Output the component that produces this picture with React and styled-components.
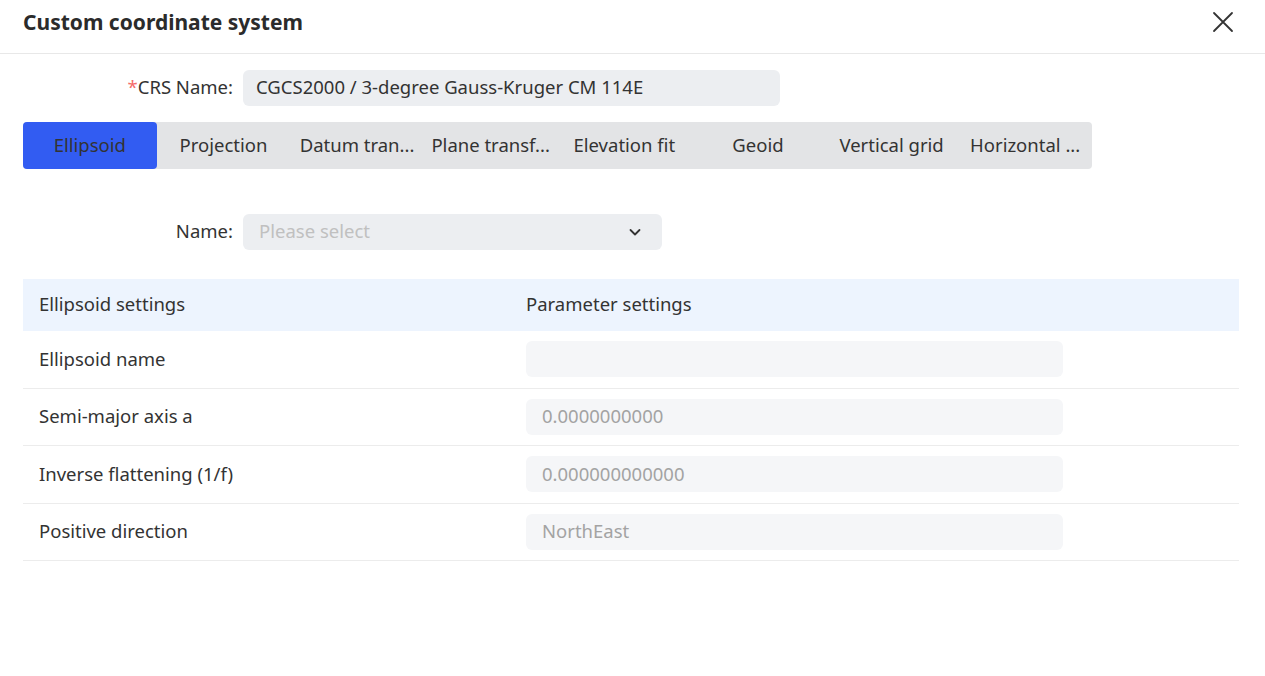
import React from "react";
import styled, { createGlobalStyle } from "styled-components";

const Global = createGlobalStyle`
  html, body { margin: 0; padding: 0; background: #fff; }
  body { font-family: "Noto Sans", "Open Sans", sans-serif; color: #333; }
  * { box-sizing: border-box; }
`;

const Dialog = styled.div`
  width: 1265px;
  height: 676px;
  background: #fff;
  display: flex;
  flex-direction: column;
`;

const Header = styled.div`
  height: 54px;
  display: flex;
  align-items: center;
  justify-content: space-between;
  padding: 0 30px 0 23px;
  border-bottom: 1px solid #e8e8e8;
`;

const Title = styled.h1`
  margin: 0;
  font-size: 21px;
  font-weight: 700;
  color: #2b2b2b;
  margin-top: -10px;
`;

const CloseBtn = styled.button`
  border: 0;
  background: none;
  padding: 0;
  width: 24px;
  height: 24px;
  display: flex;
  align-items: center;
  justify-content: center;
  margin-top: -10px;
  cursor: pointer;
`;

const Body = styled.div`
  padding: 16px 26px 0 23px;
  display: flex;
  flex-direction: column;
  font-size: 18.5px;
  line-height: 1.2;
`;

const FormRow = styled.div`
  display: flex;
  align-items: center;
  height: 36px;
  margin-bottom: ${(p) => p.$mb || 0}px;
  padding-bottom: 1px;
`;

const Label = styled.label`
  width: 220px;
  text-align: right;
  padding-right: 10px;
  color: #333;
  white-space: nowrap;
`;

const Star = styled.span`
  color: #f56c6c;
`;

const Field = styled.div`
  width: ${(p) => p.$w}px;
  height: 36px;
  margin-top: 1px;
  background: ${(p) => p.$bg || "#eceef1"};
  border-radius: 6px;
  display: flex;
  align-items: center;
  justify-content: space-between;
  padding: 0 20px 1px ${(p) => p.$pl || 13}px;
  color: ${(p) => p.$color || "#333"};
  white-space: nowrap;
`;

const Tabs = styled.div`
  width: 1069px;
  height: 47px;
  background: #e3e4e6;
  border-radius: 4px;
  display: grid;
  grid-template-columns: repeat(8, 1fr);
  margin-bottom: 45px;
`;

const Tab = styled.div`
  display: flex;
  align-items: center;
  justify-content: center;
  border-radius: 4px;
  color: #333;
  background: ${(p) => (p.$active ? "#325cf2" : "transparent")};
  white-space: nowrap;
  overflow: hidden;
  padding: 0 4px 1px;
`;

const Table = styled.div`
  width: 1216px;
  margin-top: 29px;
`;

const HeadRow = styled.div`
  display: grid;
  grid-template-columns: 487px 1fr;
  height: 52px;
  align-items: center;
  background: #edf4fe;
  color: #333;
  padding-bottom: 1px;
`;

const Row = styled.div`
  display: grid;
  grid-template-columns: 487px 1fr;
  height: 57.5px;
  align-items: center;
  border-bottom: 1px solid #ececec;
  color: #333;
`;

const Cell = styled.div`
  padding-left: 16px;
`;

const KeyCell = styled(Cell)`
  padding-bottom: 1px;
`;

const ValueBox = styled.div`
  width: 537px;
  height: 36px;
  border-radius: 6px;
  background: #f5f6f8;
  display: flex;
  align-items: center;
  padding: 0 0 1px 16px;
  color: #a3a3a3;
`;

const rows = [
  ["Ellipsoid name", ""],
  ["Semi-major axis a", "0.0000000000"],
  ["Inverse flattening (1/f)", "0.000000000000"],
  ["Positive direction", "NorthEast"],
];

const tabs = [
  "Ellipsoid",
  "Projection",
  "Datum tran...",
  "Plane transf...",
  "Elevation fit",
  "Geoid",
  "Vertical grid",
  "Horizontal ...",
];

export default function App() {
  return (
    <Dialog>
      <Global />
      <Header>
        <Title>Custom coordinate system</Title>
        <CloseBtn aria-label="close">
          <svg width="22" height="22" viewBox="0 0 22 22">
            <path d="M2 2L20 20M20 2L2 20" stroke="#333" strokeWidth="1.8" strokeLinecap="round" />
          </svg>
        </CloseBtn>
      </Header>
      <Body>
        <FormRow $mb={16}>
          <Label>
            <Star>*</Star>CRS Name:
          </Label>
          <Field $w={537}>CGCS2000 / 3-degree Gauss-Kruger CM 114E</Field>
        </FormRow>
        <Tabs>
          {tabs.map((t, i) => (
            <Tab key={t} $active={i === 0}>
              {t}
            </Tab>
          ))}
        </Tabs>
        <FormRow>
          <Label>Name:</Label>
          <Field $w={419} $pl={16} $color="#c0c0c0">
            Please select
            <svg width="14" height="14" viewBox="0 0 14 14">
              <path d="M2.5 5L7 9.5L11.5 5" stroke="#333" strokeWidth="1.8" fill="none" strokeLinecap="round" strokeLinejoin="round" />
            </svg>
          </Field>
        </FormRow>
        <Table>
          <HeadRow>
            <Cell>Ellipsoid settings</Cell>
            <Cell>Parameter settings</Cell>
          </HeadRow>
          {rows.map(([k, v]) => (
            <Row key={k}>
              <KeyCell>{k}</KeyCell>
              <Cell>
                <ValueBox>{v}</ValueBox>
              </Cell>
            </Row>
          ))}
        </Table>
      </Body>
    </Dialog>
  );
}
